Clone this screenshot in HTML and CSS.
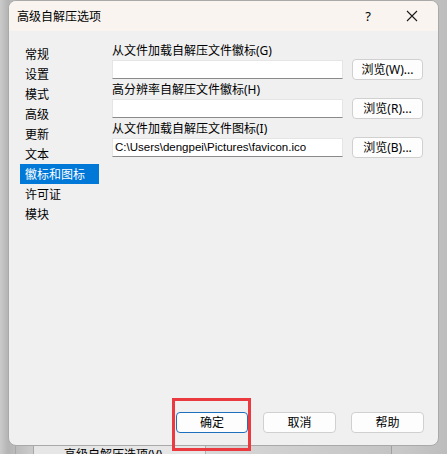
FILE: index.html
```
<!DOCTYPE html>
<html lang="zh">
<head>
<meta charset="utf-8">
<title>高级自解压选项</title>
<link rel="stylesheet" href="styles.css">
</head>
<body>
<div class="desktop">
  <div class="window">
    <div class="titlebar">
      <span class="title">高级自解压选项</span>
      <span class="help-btn">?</span>
      <span class="close-btn">
        <svg width="12" height="12" viewBox="0 0 12 12"><path d="M1 1 L11 11 M11 1 L1 11" stroke="#1a1a1a" stroke-width="1.1" fill="none"/></svg>
      </span>
    </div>
    <div class="body">
      <div class="main">
        <ul class="sidebar">
          <li>常规</li>
          <li>设置</li>
          <li>模式</li>
          <li>高级</li>
          <li>更新</li>
          <li>文本</li>
          <li class="selected">徽标和图标</li>
          <li>许可证</li>
          <li>模块</li>
        </ul>
        <div class="pane">
          <div class="group">
            <div class="label">从文件加载自解压文件徽标(G)</div>
            <div class="row"><div class="field"></div><div class="btn">浏览(W)...</div></div>
          </div>
          <div class="group">
            <div class="label">高分辨率自解压文件徽标(H)</div>
            <div class="row"><div class="field"></div><div class="btn">浏览(R)...</div></div>
          </div>
          <div class="group">
            <div class="label">从文件加载自解压文件图标(I)</div>
            <div class="row"><div class="field path">C:\Users\dengpei\Pictures\favicon.ico</div><div class="btn">浏览(B)...</div></div>
          </div>
        </div>
      </div>
      <div class="footer">
        <div class="btn wide default">确定</div>
        <div class="btn wide">取消</div>
        <div class="btn wide">帮助</div>
      </div>
    </div>
  </div>
  <div class="behind">
    <div class="seg s1"></div>
    <div class="seg s2"></div>
    <div class="seg s3"><span class="behind-text">高级自解压选项(V)</span></div>
    <div class="seg s4"></div>
    <div class="seg s5"></div>
  </div>
  <div class="highlight"></div>
</div>
</body>
</html>
```
FILE: styles.css
```
* { box-sizing: border-box; }
html, body { margin: 0; padding: 0; }
body {
  font-family: "Noto Sans", "Noto Sans CJK SC", sans-serif;
  font-size: 12px;
  color: #000;
}
.desktop {
  position: relative;
  width: 447px;
  height: 454px;
  overflow: hidden;
  background: linear-gradient(to right, #cbcbcb 0px, #b4b4b4 8px, #c9c9c9 30px, #d6d6d6 200px, #c8c8c8 400px, #bdbdbd 447px);
  display: flex;
  flex-direction: column;
}
.window {
  margin-left: 8px;
  width: 431px;
  height: 446px;
  flex: none;
  border: 1px solid #a9a9a9;
  border-radius: 8px;
  overflow: hidden;
  background: #f0f0f0;
  display: flex;
  flex-direction: column;
}
.titlebar {
  height: 30px;
  flex: none;
  background: #f9f4ef;
  display: flex;
  align-items: center;
  padding-left: 8px;
}
.title {
  font-size: 12px;
  flex: 1;
  padding-bottom: 1px;
}
.help-btn {
  width: 20px;
  text-align: center;
  font-size: 13px;
  margin-right: 24px;
  padding-bottom: 1px;
}
.close-btn {
  width: 20px;
  display: flex;
  justify-content: center;
  margin-right: 16px;
}
.body {
  flex: 1;
  display: flex;
  flex-direction: column;
}
.main {
  flex: 1;
  display: flex;
  padding-top: 12px;
}
.sidebar {
  list-style: none;
  margin: 0 0 0 11px;
  padding: 1px 0 0 0;
  width: 79px;
  flex: none;
}
.sidebar li {
  height: 20px;
  line-height: 20px;
  padding-left: 5px;
  padding-top: 1px;
  line-height: 19px;
  white-space: nowrap;
}
.sidebar li.selected {
  background: #0078d7;
  color: #fff;
}
.pane {
  margin-left: 13px;
  display: flex;
  flex-direction: column;
  gap: 2px;
}
.label {
  height: 16px;
  line-height: 16px;
  white-space: nowrap;
}
.row {
  display: flex;
  align-items: center;
  gap: 9px;
  height: 21px;
}
.field {
  width: 231px;
  height: 19px;
  background: #fff;
  border: 1px solid #e5e5e5;
  border-bottom-color: #8a8a8a;
  padding-left: 2px;
  line-height: 17px;
  white-space: nowrap;
  overflow: hidden;
}
.field.path {
  font-family: "Liberation Sans", "Noto Sans", sans-serif;
  font-size: 11.5px;
}
.btn {
  width: 71px;
  height: 21px;
  background: #fdfdfd;
  border: 1px solid #d0d0d0;
  border-radius: 4px;
  text-align: center;
  line-height: 19px;
  white-space: nowrap;
}
.footer {
  display: flex;
  justify-content: flex-end;
  gap: 15px;
  padding: 0 14px 12px 0;
}
.btn.wide {
  width: 73px;
}
.btn.default {
  border-color: #1f6fbf;
  width: 72px;
}
.behind {
  flex: 1;
  display: flex;
}
.seg { height: 100%; }
.s1 { width: 15px; }
.s2 { width: 18px; border-left: 1px solid #a8a8a8; }
.s3 { width: 172px; border-left: 1px solid #a8a8a8; background: #e6e6e6; padding-left: 30px; overflow: hidden; }
.s4 { width: 186px; border-left: 1px solid #b0b0b0; background: linear-gradient(to right, #d8d8d8, #c4c4c4); }
.s5 { flex: 1; border-left: 1px solid #a0a0a0; }
.behind-text {
  display: block;
  line-height: 12px;
  margin-top: 3px;
  white-space: nowrap;
}
.highlight {
  position: absolute;
  left: 172px;
  top: 398px;
  width: 79px;
  height: 53px;
  border: 3px solid #ea3a3f;
}
```
